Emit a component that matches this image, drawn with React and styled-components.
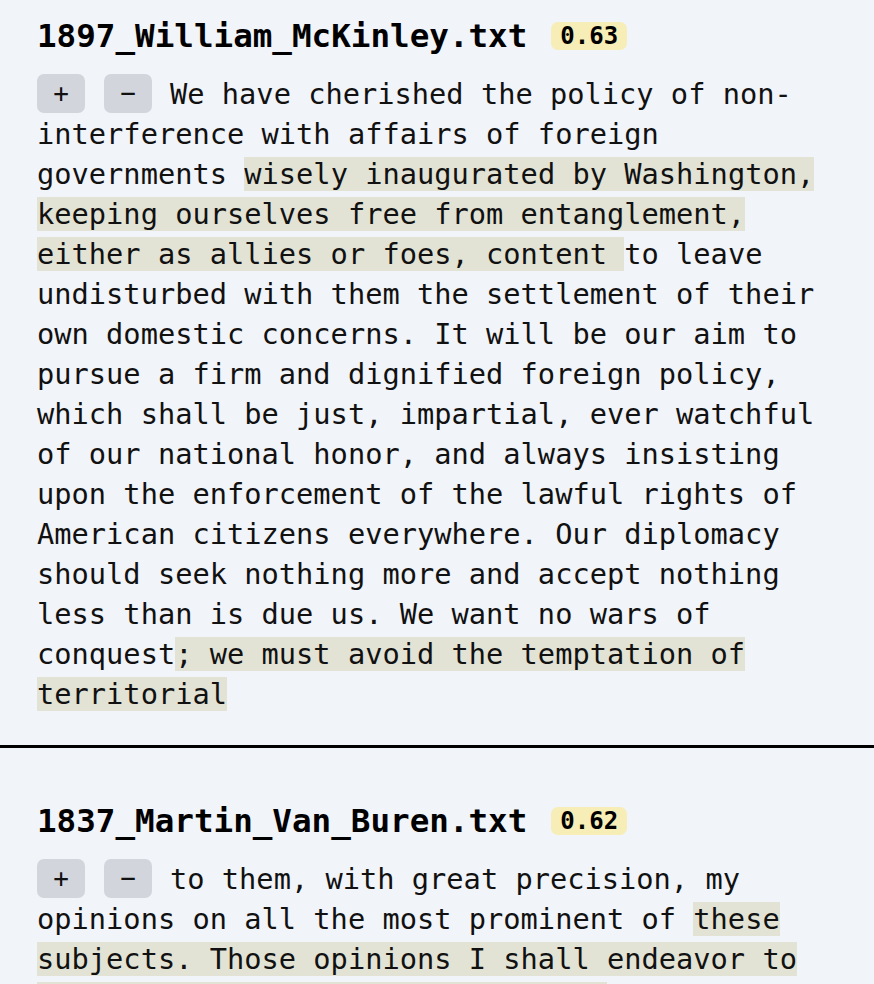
import styled, { createGlobalStyle } from "styled-components";

const GlobalStyle = createGlobalStyle`
  body {
    margin: 0;
    background: #f1f4f9;
    color: #111111;
    font-family: "DejaVu Sans Mono", "Liberation Mono", monospace;
  }
`;

const Page = styled.div`
  width: 100%;
`;

const Result = styled.section`
  padding: 16px 37px 0;
`;

const TitleRow = styled.div`
  display: flex;
  align-items: center;
  gap: 24px;
  height: 40px;
  margin-bottom: 18px;
`;

const FileName = styled.h2`
  margin: 0;
  font-size: 32.6px;
  line-height: 40px;
  font-weight: 700;
  color: #000;
`;

const Score = styled.span`
  display: inline-block;
  padding: 0 9px;
  height: 28px;
  line-height: 28px;
  font-size: 24px;
  font-weight: 700;
  color: #000;
  background: #f7edb6;
  border-radius: 7px;
`;

const Passage = styled.p`
  margin: 0;
  font-size: 28.7px;
  line-height: 40px;
  color: #111;
`;

const VoteButton = styled.button`
  display: inline-block;
  vertical-align: top;
  width: 48px;
  height: 39px;
  margin-right: ${(props) => props.$gap || "19px"};
  padding: 0;
  border: none;
  border-radius: 7px;
  background: #d2d6dc;
  color: #111;
  font-family: "DejaVu Sans Mono", monospace;
  font-size: 26px;
  line-height: 39px;
  cursor: pointer;
`;

const Match = styled.mark`
  background: #e2e3d5;
  color: inherit;
`;

const Divider = styled.div`
  height: 3px;
  background: #000;
  margin: 31px 0 37px;
`;

const Controls = () => (
  <>
    <VoteButton>+</VoteButton>
    <VoteButton $gap="18px">−</VoteButton>
  </>
);

export default function App() {
  return (
    <Page>
      <GlobalStyle />
      <Result>
        <TitleRow>
          <FileName>1897_William_McKinley.txt</FileName>
          <Score>0.63</Score>
        </TitleRow>
        <Passage>
          <Controls />
          We have cherished the policy of non-interference with affairs of
          foreign governments{" "}
          <Match>
            wisely inaugurated by Washington, keeping ourselves free from
            entanglement, either as allies or foes, content{" "}
          </Match>
          to leave undisturbed with them the settlement of their own domestic
          concerns. It will be our aim to pursue a firm and dignified foreign
          policy, which shall be just, impartial, ever watchful of our national
          honor, and always insisting upon the enforcement of the lawful rights
          of American citizens everywhere. Our diplomacy should seek nothing
          more and accept nothing less than is due us. We want no wars of
          conquest
          <Match>; we must avoid the temptation of territorial</Match>
        </Passage>
      </Result>
      <Divider />
      <Result>
        <TitleRow>
          <FileName>1837_Martin_Van_Buren.txt</FileName>
          <Score>0.62</Score>
        </TitleRow>
        <Passage>
          <Controls />
          to them, with great precision, my opinions on all the most prominent
          of{" "}
          <Match>
            these subjects. Those opinions I shall endeavor to carry out with
            my utmost ability.
          </Match>
        </Passage>
      </Result>
    </Page>
  );
}
